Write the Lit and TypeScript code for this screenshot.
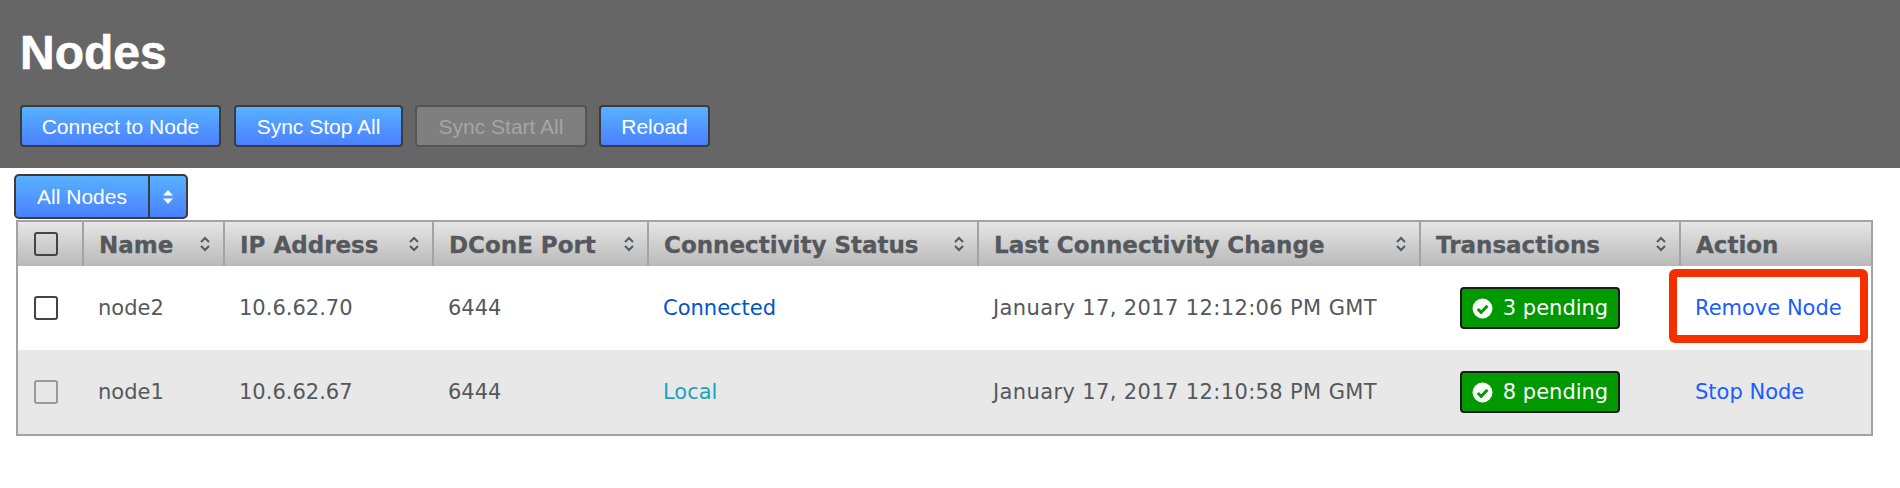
import { LitElement, html, css } from "lit";
import { customElement } from "lit/decorators.js";

const sortIcon = html`<svg class="sort" viewBox="0 0 12 18" width="12" height="18"><path d="M2 7l4-4 4 4M2 11l4 4 4-4" fill="none" stroke="#555a60" stroke-width="2"/></svg>`;
const check = html`<svg class="chk" viewBox="0 0 20 20" width="21" height="21"><circle cx="10" cy="10" r="9.5" fill="#fff"/><path d="M5.5 10.5l3.2 3.2 6-6.4" fill="none" stroke="#090" stroke-width="2.8"/></svg>`;

const cols = [
  { w: 66, label: "" },
  { w: 141, label: "Name" },
  { w: 209, label: "IP Address" },
  { w: 215, label: "DConE Port" },
  { w: 330, label: "Connectivity Status" },
  { w: 442, label: "Last Connectivity Change" },
  { w: 260, label: "Transactions" },
  { w: 190, label: "Action" },
];

const rows = [
  { box: "on", name: "node2", ip: "10.6.62.70", status: "Connected", cls: "conn", date: "January 17, 2017 12:12:06 PM GMT", pending: "3 pending", action: "Remove Node", flag: true, alt: false },
  { box: "off", name: "node1", ip: "10.6.62.67", status: "Local", cls: "local", date: "January 17, 2017 12:10:58 PM GMT", pending: "8 pending", action: "Stop Node", flag: false, alt: true },
];

@customElement("app-root")
export class AppRoot extends LitElement {
  static styles = css`
    :host { display: block; font-family: "Liberation Sans", Arial, sans-serif; background: #fff; height: 488px; overflow: hidden; }
    .top { background: #666; height: 168px; box-sizing: border-box; padding: 27px 0 0 20px; }
    h1 { margin: 0; color: #fff; font-size: 48px; line-height: 52px; font-weight: 700; -webkit-text-stroke: 0.6px #fff; }
    .btns { display: flex; gap: 12px; margin-top: 26px; }
    .btn { box-sizing: border-box; height: 42px; padding-top: 1px; border: 2px solid #3c3c3c; border-radius: 4px; color: #fff; font-size: 21px; display: flex; align-items: center; justify-content: center; background: linear-gradient(#58b2ff, #4a80ff); }
    .btn.dis { background: #7f7f7f; color: #a5a5a5; border-color: #555; }
    .w1 { width: 201px; margin-right: 1px; } .w2 { width: 169px; } .w3 { width: 172px; } .w4 { width: 111px; }
    .sel { margin: 6px 0 0 14px; width: 174px; height: 45px; box-sizing: border-box; border: 2px solid #3c3c3c; border-radius: 5px; display: flex; color: #fff; font-size: 21px; background: linear-gradient(#58b2ff, #4a80ff); }
    .sel .l { width: 132px; display: flex; align-items: center; justify-content: center; border-right: 2px solid #3c3c3c; }
    .sel .r { flex: 1; display: flex; align-items: center; justify-content: center; }
    .tbl { margin: 1px 0 0 16px; width: 1857px; box-sizing: border-box; border: 2px solid #a3a3a3; font-family: "DejaVu Sans", sans-serif; color: #55585c; }
    .row { display: flex; }
    .head { height: 44px; background: linear-gradient(#e6e6e6, #b9b9b9); font-weight: 700; font-size: 23px; }
    .label { padding-top: 2px; -webkit-text-stroke: 0.3px #55585c; }
    .hc { box-sizing: border-box; display: flex; align-items: center; justify-content: space-between; padding: 0 12px 0 15px; border-right: 2px solid #a3a3a3; }
    .hc:last-child { border-right: 0; }
    .hc.first { justify-content: flex-start; padding: 0 0 0 16px; }
    .cb { box-sizing: border-box; width: 24px; height: 24px; border: 2px solid #444; border-radius: 3px; background: #fff; display: block; }
    .head .cb { background: transparent; }
    .cb.off { border-color: #999; background: transparent; }
    .body { height: 84px; font-size: 21px; align-items: center; }
    .alt { background: #e8e8e8; }
    .c { box-sizing: border-box; padding-left: 14px; display: flex; align-items: center; height: 100%; }
    .c.first { padding-left: 16px; }
    .date { letter-spacing: 0.37px; }
    .conn { color: #0055cc; }
    .local { color: #1ca3bf; }
    .act { color: #1a5cff; position: relative; }
    .flag::before { content: ""; position: absolute; left: -26px; top: -27px; width: 199px; height: 74px; box-sizing: border-box; border: 8px solid #f53000; border-radius: 6px; }
    .badge { box-sizing: border-box; margin-left: 39px; width: 160px; height: 42px; background: #090; border: 2px solid #1c1c1c; border-radius: 4px; color: #fff; font-size: 21px; display: flex; align-items: center; justify-content: center; gap: 10px; }
    .chk { flex: none; }
  `;

  render() {
    return html`
      <div class="top">
        <h1>Nodes</h1>
        <div class="btns">
          <div class="btn w1">Connect to Node</div>
          <div class="btn w2">Sync Stop All</div>
          <div class="btn w3 dis">Sync Start All</div>
          <div class="btn w4">Reload</div>
        </div>
      </div>
      <div class="sel">
        <div class="l">All Nodes</div>
        <div class="r"><svg viewBox="0 0 12 16" width="12" height="16"><path d="M6 1l5 5.5H1zM6 15l5-5.5H1z" fill="#fff"/></svg></div>
      </div>
      <div class="tbl">
        <div class="row head">
          ${cols.map((c, i) => html`<div class="hc ${i === 0 ? "first" : ""}" style="width:${c.w}px">
            ${i === 0 ? html`<span class="cb"></span>` : html`<span class="label">${c.label}</span>${i < 7 ? sortIcon : ""}`}
          </div>`)}
        </div>
        ${rows.map((r) => html`<div class="row body ${r.alt ? "alt" : ""}">
          <div class="c first" style="width:${cols[0].w}px"><span class="cb ${r.box}"></span></div>
          <div class="c" style="width:${cols[1].w}px">${r.name}</div>
          <div class="c" style="width:${cols[2].w}px">${r.ip}</div>
          <div class="c" style="width:${cols[3].w}px">6444</div>
          <div class="c ${r.cls}" style="width:${cols[4].w}px">${r.status}</div>
          <div class="c date" style="width:${cols[5].w}px">${r.date}</div>
          <div class="c" style="width:${cols[6].w}px;padding:0"><div class="badge">${check}${r.pending}</div></div>
          <div class="c" style="width:${cols[7].w}px"><span class="act ${r.flag ? "flag" : ""}">${r.action}</span></div>
        </div>`)}
      </div>
    `;
  }
}
